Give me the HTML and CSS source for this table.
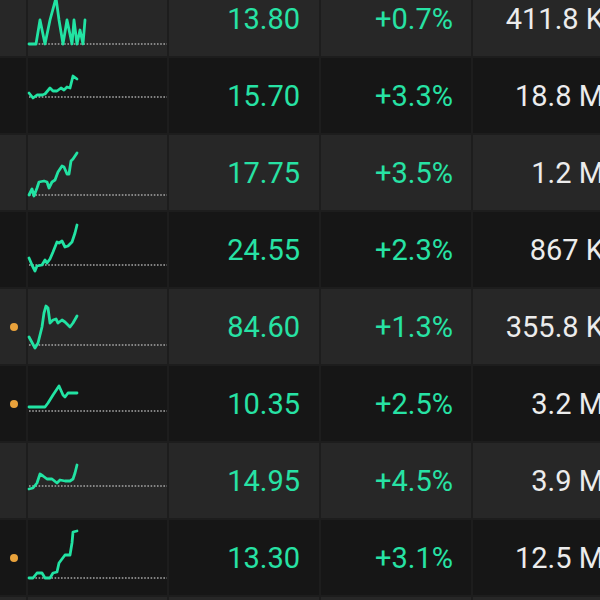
FILE: index.html
```html
<!DOCTYPE html>
<html>
<head>
<meta charset="utf-8">
<link rel="stylesheet" href="styles.css">
</head>
<body>
<div class="table">
  <div class="row light">
    <div class="cell mark"></div>
    <div class="cell spark"><svg width="139" height="75" viewBox="28 -19 139 75"><line class="base" x1="29" y1="44" x2="167" y2="44"/><polyline class="line" points="29,44 36,44 40,20 45,44 50,20 56,-2 59,20 63,44 67,20 72,44 74,20 77,44 80,30 83,44 85,20"/></svg></div>
    <div class="cell price">13.80</div>
    <div class="cell pct">+0.7%</div>
    <div class="cell vol">411.8 K</div>
  </div>
  <div class="row dark">
    <div class="cell mark"></div>
    <div class="cell spark"><svg width="139" height="75" viewBox="28 58 139 75"><line class="base" x1="29" y1="97" x2="167" y2="97"/><polyline class="line" points="29,93 33,98 37,95 42,95 45,94 50,88 53,91 57,91 61,88 64,90 67,87 70,88 73,76 77,79"/></svg></div>
    <div class="cell price">15.70</div>
    <div class="cell pct">+3.3%</div>
    <div class="cell vol">18.8 M</div>
  </div>
  <div class="row light">
    <div class="cell mark"></div>
    <div class="cell spark"><svg width="139" height="75" viewBox="28 135 139 75"><line class="base" x1="29" y1="195" x2="167" y2="195"/><polyline class="line" points="29,195 32,189 34,196 37,188 39,182 44,181 47,182 49,188 52,182 55,180 58,172 62,166 64,167 67,174 69,174 71,161 73,159 77,153"/></svg></div>
    <div class="cell price">17.75</div>
    <div class="cell pct">+3.5%</div>
    <div class="cell vol">1.2 M</div>
  </div>
  <div class="row dark">
    <div class="cell mark"></div>
    <div class="cell spark"><svg width="139" height="75" viewBox="28 212 139 75"><line class="base" x1="29" y1="265" x2="167" y2="265"/><polyline class="line" points="29,258 32,265 35,271 37,266 42,265 45,260 47,263 50,259 53,252 57,242 59,243 62,241 65,247 68,246 72,242 75,233 77,225"/></svg></div>
    <div class="cell price">24.55</div>
    <div class="cell pct">+2.3%</div>
    <div class="cell vol">867 K</div>
  </div>
  <div class="row light">
    <div class="cell mark"><span class="dot"></span></div>
    <div class="cell spark"><svg width="139" height="75" viewBox="28 289 139 75"><line class="base" x1="29" y1="345" x2="167" y2="345"/><polyline class="line" points="29,337 35,348 38,343 42,327 44,313 46,306 48,308 50,323 53,320 56,319 58,323 62,320 65,322 70,327 73,323 77,316"/></svg></div>
    <div class="cell price">84.60</div>
    <div class="cell pct">+1.3%</div>
    <div class="cell vol">355.8 K</div>
  </div>
  <div class="row dark">
    <div class="cell mark"><span class="dot"></span></div>
    <div class="cell spark"><svg width="139" height="75" viewBox="28 366 139 75"><line class="base" x1="29" y1="411" x2="167" y2="411"/><polyline class="line" points="29,407 45,407 48,403 53,395 59,386 63,395 65,397 68,393 77,393"/></svg></div>
    <div class="cell price">10.35</div>
    <div class="cell pct">+2.5%</div>
    <div class="cell vol">3.2 M</div>
  </div>
  <div class="row light">
    <div class="cell mark"></div>
    <div class="cell spark"><svg width="139" height="75" viewBox="28 443 139 75"><line class="base" x1="29" y1="486" x2="167" y2="486"/><polyline class="line" points="29,489 33,488 37,483 40,474 43,476 47,479 52,479 57,483 60,480 65,481 70,481 73,479 75,473 77,465"/></svg></div>
    <div class="cell price">14.95</div>
    <div class="cell pct">+4.5%</div>
    <div class="cell vol">3.9 M</div>
  </div>
  <div class="row dark">
    <div class="cell mark"><span class="dot"></span></div>
    <div class="cell spark"><svg width="139" height="75" viewBox="28 520 139 75"><line class="base" x1="29" y1="578" x2="167" y2="578"/><polyline class="line" points="29,578 33,578 37,573 42,573 45,578 50,578 53,573 57,572 59,563 62,559 65,555 70,555 72,543 73,532 77,531"/></svg></div>
    <div class="cell price">13.30</div>
    <div class="cell pct">+3.1%</div>
    <div class="cell vol">12.5 M</div>
  </div>
  <div class="row light">
    <div class="cell mark"></div>
    <div class="cell spark"></div>
    <div class="cell price"></div>
    <div class="cell pct"></div>
    <div class="cell vol"></div>
  </div>
</div>
</body>
</html>
```
FILE: styles.css
```css
html, body {
  margin: 0;
  padding: 0;
  background: #1d1d1d;
  overflow: hidden;
  width: 600px;
  height: 600px;
}
.table {
  display: grid;
  row-gap: 2px;
  margin-top: -19px;
  width: 620px;
  font-family: Roboto, "Noto Sans", sans-serif;
  font-size: 29px;
}
.row {
  display: grid;
  grid-template-columns: 26px 139px 150px 150px 147px;
  column-gap: 2px;
  height: 75px;
}
.light .cell { background: #272727; }
.dark .cell { background: #161616; }
.cell {
  display: flex;
  align-items: center;
  justify-content: flex-end;
  white-space: nowrap;
}
.mark { justify-content: center; }
.dot {
  width: 8px;
  height: 8px;
  border-radius: 50%;
  background: #e9a23b;
  margin-left: 2px;
}
.spark { justify-content: flex-start; overflow: visible; }
.spark svg { display: block; overflow: visible; }
.base {
  stroke: #a6a6a6;
  stroke-width: 1.6;
  stroke-dasharray: 1.6 1.6;
}
.line {
  fill: none;
  stroke: #22e3a3;
  stroke-width: 2.8;
  stroke-linejoin: round;
  stroke-linecap: round;
}
.price, .pct {
  color: #27e2a4;
  padding-right: 19px;
}
.pct { padding-right: 18px; }
.vol {
  color: #ececec;
  padding-right: 16px;
}
```
